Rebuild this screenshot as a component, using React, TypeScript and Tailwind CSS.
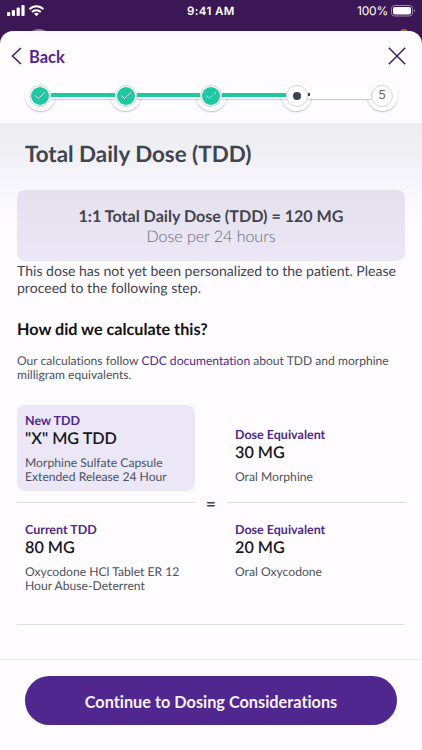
import React from "react";
import clsx from "clsx";

const steps = ["done", "done", "done", "current", "todo"];

function StatusBar() {
  return (
    <div className="relative flex h-[31px] shrink-0 items-start justify-between pl-[7px] pr-[6px] font-['Inter',sans-serif] text-white">
      <div className="flex pt-[5px]">
        <svg width="37" height="12" viewBox="0 0 37 12" fill="currentColor">
          <rect x="0" y="7" width="3.2" height="4" rx="1" />
          <rect x="4.8" y="5" width="3.2" height="6" rx="1" />
          <rect x="9.6" y="2.5" width="3.2" height="8.5" rx="1" />
          <rect x="14.4" y="0" width="3.2" height="11" rx="1" />
          <g fill="none" stroke="currentColor" strokeWidth="2">
            <path d="M22.5 4.2a9.8 9.8 0 0 1 13.8 0" />
            <path d="M25 7a6.3 6.3 0 0 1 8.8 0" />
          </g>
          <path d="M29.4 11.2 27 8.8a3.5 3.5 0 0 1 4.8 0z" />
        </svg>
      </div>
      <span className="absolute left-[187px] top-[4px] text-[11.5px] leading-[14px] font-semibold tracking-[0.4px]">
        9:41 AM
      </span>
      <div className="flex items-center gap-[3px] pt-[4px]">
        <span className="text-[12px] leading-[14px] tracking-[-0.2px]">100%</span>
        <svg width="25" height="12" viewBox="0 0 25 12">
          <rect x="0.5" y="0.5" width="21" height="10.5" rx="3" fill="none" stroke="#9d88ae" />
          <rect x="2" y="2" width="18" height="7.5" rx="1.8" fill="#fff" />
          <path d="M23.2 4a2.2 2.2 0 0 1 0 3.6z" fill="#9d88ae" />
        </svg>
      </div>
      <div className="absolute left-[26px] top-[28.5px] h-[26px] w-[26px] rounded-full bg-[#8d7f9c]" />
      <div className="absolute left-[400px] top-[28.5px] h-[8px] w-[8px] rounded-full bg-[#a8692f]" />
    </div>
  );
}

function StepCircle({ state, label }: { state: string; label: number }) {
  return (
    <div className="z-10 flex h-[31px] w-[31px] shrink-0 items-center justify-center rounded-full bg-white shadow-[0_1px_1.5px_rgba(60,50,80,0.3)]">
      <div
        className={clsx(
          "flex h-[22px] w-[22px] items-center justify-center rounded-full border",
          state === "done" ? "border-[#c3dcd9]" : "border-[#d4d4da]"
        )}
      >
        {state === "done" && (
          <div className="flex h-[18px] w-[18px] shrink-0 items-center justify-center rounded-full bg-[#1fc8a0]">
            <svg width="12" height="9" viewBox="0 0 12 9" fill="none" stroke="#e8fff8" strokeWidth="1">
              <path d="M1 4.2 4.5 7.4 11 1.2" />
            </svg>
          </div>
        )}
        {state === "current" && <div className="h-[8px] w-[8px] rounded-full bg-[#3c4150]" />}
        {state === "todo" && (
          <span className="pt-px font-['Inter',sans-serif] text-[12.5px] leading-none text-[#686b76]">{label}</span>
        )}
      </div>
    </div>
  );
}

function Stepper() {
  return (
    <div className="flex h-[43px] shrink-0 items-start px-[24.5px]">
      {steps.map((state, i) => (
        <React.Fragment key={i}>
          {i > 0 && (
            <div className="z-20 mx-[-4.5px] mt-[10px] flex h-[9px] flex-1 items-center bg-white shadow-[0_1px_1px_rgba(60,50,80,0.22)]">
              {state === "todo" ? (
                <div className="h-[3px] w-[2px] bg-[#3c4150]" />
              ) : (
                <div className="h-[4px] w-full bg-[#1fc8a0]" />
              )}
            </div>
          )}
          <StepCircle state={state} label={i + 1} />
        </React.Fragment>
      ))}
    </div>
  );
}

type DoseProps = {
  label: string;
  value: string;
  detail: string;
  className?: string;
};

function Dose({ label, value, detail, className }: DoseProps) {
  return (
    <div className={clsx("px-[8px]", className)}>
      <p className="text-[12.5px] leading-[15px] font-bold text-[#4f2891]">{label}</p>
      <p className="mt-px text-[16.2px] leading-[19px] font-semibold text-[#16161d]">{value}</p>
      <p className="mt-[8px] text-[12.15px] leading-[14.3px] text-[#4b5160]">{detail}</p>
    </div>
  );
}

export default function App() {
  return (
    <div className="flex h-[750px] w-[422px] flex-col overflow-hidden bg-[#3c1755] font-['Lato',sans-serif] [font-variant-ligatures:none] [text-rendering:geometricPrecision]">
      <StatusBar />

      <div className="relative flex flex-1 flex-col rounded-t-[13px] bg-[#fefcff]">
        <div className="flex h-[49px] shrink-0 items-center justify-between pl-[11px] pr-[16px] text-[#4f2891]">
          <button className="flex items-center gap-[7px]">
            <svg width="11" height="18" viewBox="0 0 11 18" fill="none" stroke="#42286f" strokeWidth="1.7">
              <path d="M10 1 1.5 9 10 17" />
            </svg>
            <span className="pt-[2px] text-[16.5px] leading-[20px] font-bold">Back</span>
          </button>
          <svg width="18" height="18" viewBox="0 0 18 18" fill="none" stroke="#42286f" strokeWidth="1.6">
            <path d="M.8.8 17.2 17.2M17.2.8.8 17.2" />
          </svg>
        </div>

        <Stepper />

        <main className="flex flex-1 flex-col bg-[linear-gradient(#ededf1,#f0eff4_30px,#f6f5fb_55px,#fefcff_105px)] px-[17px]">
          <h1 className="px-[8px] pt-[17px] text-[22.4px] leading-[27px] font-bold text-[#3f4452]">
            Total Daily Dose (TDD)
          </h1>

          <div className="mt-[23px] flex h-[71px] shrink-0 flex-col items-center justify-center rounded-[8px] bg-[linear-gradient(#e4e1ed,#ebe7f6)] pt-[2px] text-[#3f4452]">
            <p className="text-[16.1px] leading-[20px] font-bold">1:1 Total Daily Dose (TDD) = 120 MG</p>
            <p className="text-[16px] leading-[20px] font-light text-[#666a77]">Dose per 24 hours</p>
          </div>
          <p className="pt-px text-[14.05px] leading-[17.3px] whitespace-nowrap text-[#3f4452]">
            This dose has not yet been personalized to the patient. Please
            <br />
            proceed to the following step.
          </p>

          <h2 className="mt-[23px] text-[16.2px] leading-[20px] font-bold text-[#111116]">How did we calculate this?</h2>
          <p className="mt-[14px] text-[12.1px] leading-[14.3px] whitespace-nowrap text-[#4b5160]">
            Our calculations follow <a className="text-[#4f2891]">CDC documentation</a> about TDD and morphine
            <br />
            milligram equivalents.
          </p>

          <div className="mt-[23px] grid grid-cols-[178px_32px_179px]">
            <div className="border-b border-[#dddde4] pb-[11px]">
              <Dose
                label="New TDD"
                value={'"X" MG TDD'}
                detail="Morphine Sulfate Capsule Extended Release 24 Hour"
                className="h-[86px] rounded-[8px] bg-[#ebe7f6] pt-[8px]"
              />
            </div>
            <span className="row-span-2 pt-[89px] text-center text-[17px] leading-[20px] font-bold text-[#3f4452]">=</span>
            <div className="border-b border-[#dddde4]">
              <Dose label="Dose Equivalent" value="30 MG" detail="Oral Morphine" className="pt-[22px]" />
            </div>
            <Dose
              label="Current TDD"
              value="80 MG"
              detail="Oxycodone HCl Tablet ER 12 Hour Abuse-Deterrent"
              className="pt-[19px]"
            />
            <Dose label="Dose Equivalent" value="20 MG" detail="Oral Oxycodone" className="pt-[19px]" />
          </div>
          <div className="mt-[30px] h-px bg-[#dddfe6]" />
        </main>

        <footer className="h-[91px] shrink-0 border-t border-[#e9ebf1] px-[25px] pt-[16px]">
          <button className="h-[49px] w-full rounded-full bg-[#4f278f] pt-[3px] text-[16.3px] font-bold text-[#f8f0ff]">
            Continue to Dosing Considerations
          </button>
        </footer>
      </div>
    </div>
  );
}
